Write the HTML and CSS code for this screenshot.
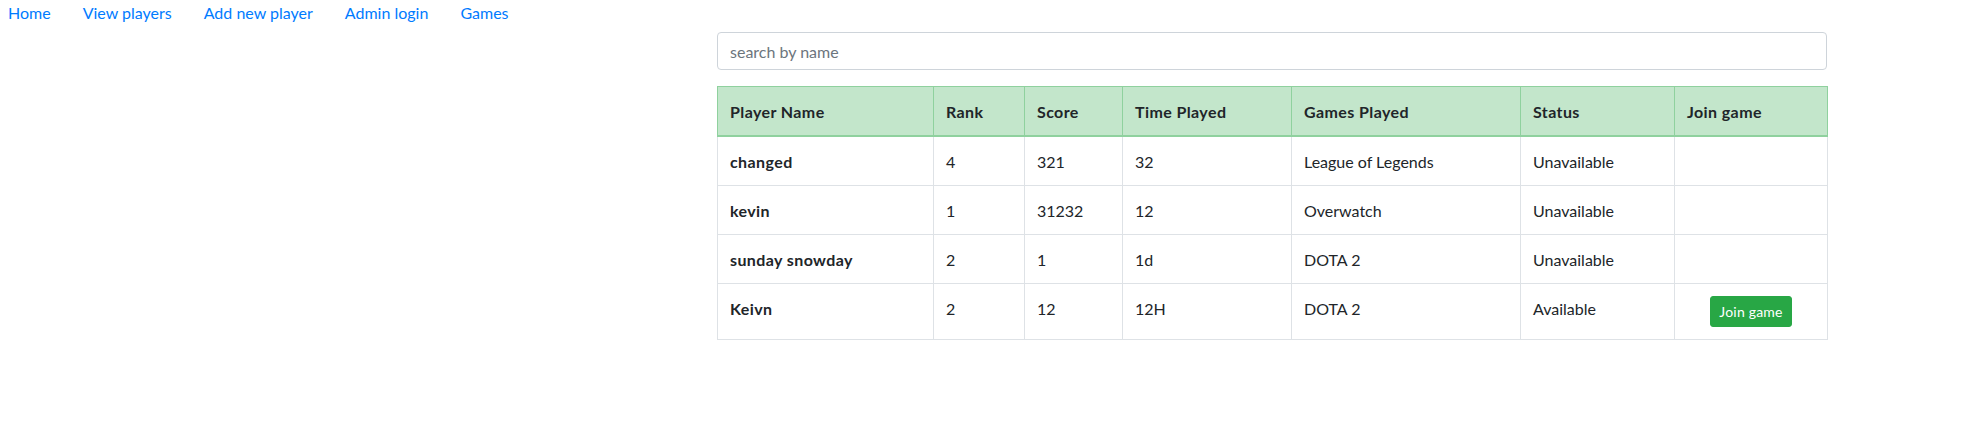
FILE: index.html
```html
<!DOCTYPE html>
<html lang="en">
<head>
<meta charset="utf-8">
<title>Players</title>
<link rel="stylesheet" href="styles.css">
</head>
<body>
<nav class="nav">
  <a class="nav-link" href="#">Home</a>
  <a class="nav-link" href="#">View players</a>
  <a class="nav-link" href="#">Add new player</a>
  <a class="nav-link" href="#">Admin login</a>
  <a class="nav-link" href="#">Games</a>
</nav>
<main class="content">
  <input class="search" type="text" placeholder="search by name">
  <table class="players">
    <colgroup>
      <col class="c-name"><col class="c-rank"><col class="c-score"><col class="c-time"><col class="c-games"><col class="c-status"><col class="c-join">
    </colgroup>
    <thead>
      <tr>
        <th>Player Name</th><th>Rank</th><th>Score</th><th>Time Played</th><th>Games Played</th><th>Status</th><th>Join game</th>
      </tr>
    </thead>
    <tbody>
      <tr><th>changed</th><td>4</td><td>321</td><td>32</td><td>League of Legends</td><td>Unavailable</td><td></td></tr>
      <tr><th>kevin</th><td>1</td><td>31232</td><td>12</td><td>Overwatch</td><td>Unavailable</td><td></td></tr>
      <tr><th>sunday snowday</th><td>2</td><td>1</td><td>1d</td><td>DOTA 2</td><td>Unavailable</td><td></td></tr>
      <tr><th>Keivn</th><td>2</td><td>12</td><td>12H</td><td>DOTA 2</td><td>Available</td><td class="join-cell"><button class="btn-join" type="button">Join game</button></td></tr>
    </tbody>
  </table>
</main>
</body>
</html>
```
FILE: styles.css
```css
* { box-sizing: border-box; }
body {
  margin: 0;
  font-family: Lato, "Noto Sans", sans-serif;
  font-size: 16px;
  line-height: 1.5;
  color: #212529;
  background: #fff;
}
.nav {
  display: flex;
  gap: 32px;
  padding: 1px 0 0 8px;
  height: 25px;
}
.nav-link {
  color: #007bff;
  text-decoration: none;
}
.content {
  margin: 7px 0 0 717px;
  width: 1110px;
}
.search {
  display: block;
  width: 100%;
  height: 38px;
  padding: 6px 12px;
  font: inherit;
  color: #495057;
  border: 1px solid #ced4da;
  border-radius: 4px;
  margin: 0 0 16px;
}
.search::placeholder { color: #6c757d; }
.players {
  width: 100%;
  border-collapse: collapse;
  table-layout: fixed;
}
.c-name { width: 216px; }
.c-rank { width: 91px; }
.c-score { width: 98px; }
.c-time { width: 169px; }
.c-games { width: 229px; }
.c-status { width: 154px; }
.c-join { width: 153px; }
.players th, .players td {
  padding: 13px 12px 11px;
  border: 1px solid #dee2e6;
  text-align: left;
  vertical-align: top;
}
.players th {
  font-weight: bold;
  letter-spacing: 0.4px;
}
.players thead th {
  background: #c3e6cb;
  border-color: #8fd19e;
  border-bottom-width: 2px;
}
.players .join-cell {
  text-align: center;
  padding: 12px;
}
.btn-join {
  font: inherit;
  font-size: 14px;
  line-height: 1.5;
  letter-spacing: 0.2px;
  padding: 4px 8px;
  color: #fff;
  background: #28a745;
  border: 1px solid #28a745;
  border-radius: 3px;
}
```
